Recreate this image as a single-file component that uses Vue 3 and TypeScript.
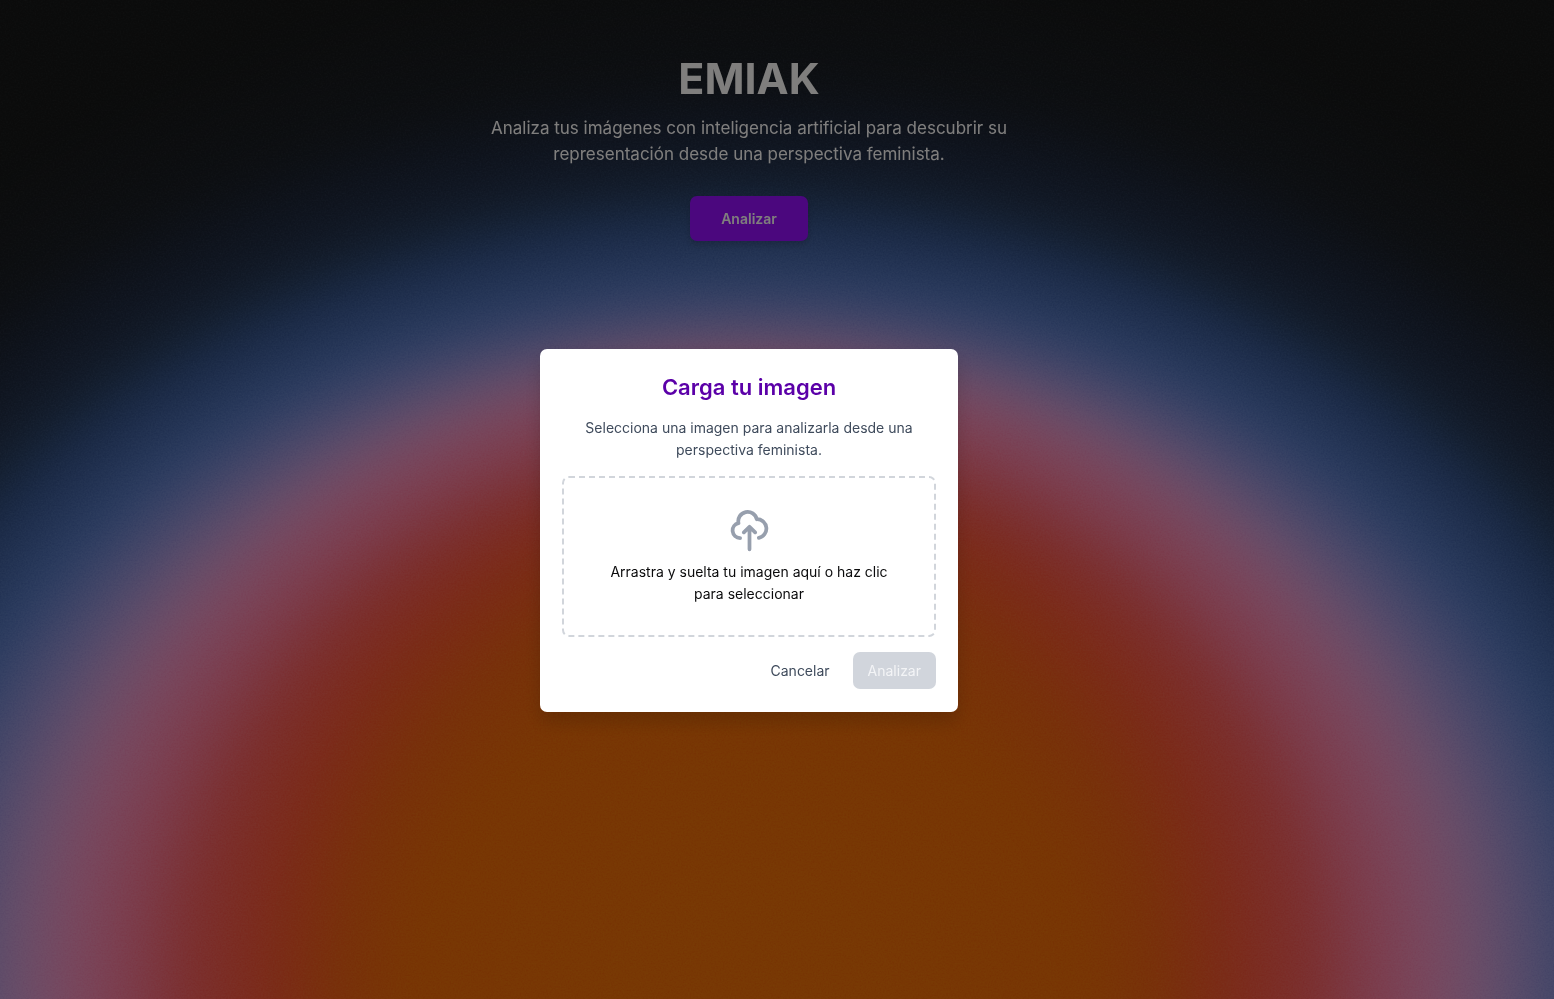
<script setup lang="ts">
import { ref } from 'vue'

interface Stop {
  rx: number
  ry: number
  rgb: [number, number, number]
}

interface Ring {
  rx: number
  ry: number
  fill: string
}

/* Colours of the glow, from the night sky at the rim to the amber core. */
const stops: Stop[] = [
  { rx: 1240, ry: 1050, rgb: [23, 24, 24] },
  { rx: 1150, ry: 925, rgb: [26, 30, 36] },
  { rx: 1080, ry: 870, rgb: [30, 40, 60] },
  { rx: 1029, ry: 832, rgb: [36, 50, 76] },
  { rx: 992, ry: 804, rgb: [42, 66, 100] },
  { rx: 956, ry: 782, rgb: [52, 82, 138] },
  { rx: 865, ry: 716, rgb: [88, 122, 194] },
  { rx: 796, ry: 678, rgb: [150, 146, 212] },
  { rx: 735, ry: 650, rgb: [208, 156, 210] },
  { rx: 684, ry: 628, rgb: [240, 144, 190] },
  { rx: 622, ry: 588, rgb: [248, 120, 150] },
  { rx: 560, ry: 546, rgb: [246, 94, 92] },
  { rx: 490, ry: 512, rgb: [246, 86, 54] },
  { rx: 450, ry: 472, rgb: [244, 90, 36] },
  { rx: 410, ry: 424, rgb: [240, 98, 20] },
  { rx: 340, ry: 330, rgb: [240, 108, 8] },
  { rx: 120, ry: 110, rgb: [240, 112, 8] },
]

const STEPS = 16

const mix = (a: number, b: number, t: number): number => a + (b - a) * t

const rings: Ring[] = stops.slice(0, -1).flatMap((from, i) => {
  const to = stops[i + 1]
  return Array.from({ length: STEPS }, (_, k) => {
    const t = k / STEPS
    const channels = from.rgb.map((c, n) => Math.round(mix(c, to.rgb[n], t)))
    return {
      rx: Math.round(mix(from.rx, to.rx, t)),
      ry: Math.round(mix(from.ry, to.ry, t)),
      fill: `rgb(${channels.join(',')})`,
    }
  })
})

const open = ref(true)
const fileName = ref('')

function onFile(event: Event): void {
  const input = event.target as HTMLInputElement
  fileName.value = input.files?.[0]?.name ?? ''
}
</script>

<template>
  <div class="page">
    <svg class="glow" viewBox="0 0 1554 999" preserveAspectRatio="none" aria-hidden="true">
      <defs>
        <filter id="soften" x="-100" y="-100" width="1754" height="1299" filterUnits="userSpaceOnUse" color-interpolation-filters="sRGB">
          <feGaussianBlur stdDeviation="18" />
        </filter>
        <filter id="grain" x="0" y="0" width="100%" height="100%" color-interpolation-filters="sRGB">
          <feTurbulence type="fractalNoise" baseFrequency="0.6" numOctaves="2" seed="4" />
          <feColorMatrix type="saturate" values="0" />
          <feComponentTransfer><feFuncA type="linear" slope="0" intercept="1" /></feComponentTransfer>
        </filter>
      </defs>
      <g filter="url(#soften)">
        <rect x="-100" y="-100" width="1754" height="1299" fill="#171818" />
        <ellipse v-for="(ring, i) in rings" :key="i" cx="749" cy="1000" :rx="ring.rx" :ry="ring.ry" :fill="ring.fill" />
      </g>
      <rect class="grain" width="1554" height="999" filter="url(#grain)" />
    </svg>

    <main class="hero">
      <h1>EMIAK</h1>
      <p>Analiza tus imágenes con inteligencia artificial para descubrir su representación desde una perspectiva feminista.</p>
      <button type="button" class="cta" @click="open = true">Analizar</button>
    </main>

    <div v-if="open" class="overlay">
      <section class="modal" role="dialog" aria-modal="true" aria-labelledby="modal-title">
        <h2 id="modal-title">Carga tu imagen</h2>
        <p class="lead">Selecciona una imagen para analizarla desde una perspectiva feminista.</p>
        <label class="drop" for="image-file">
          <svg class="cloud" viewBox="0 0 24 24" fill="none" stroke="currentColor" stroke-width="2" stroke-linecap="round" stroke-linejoin="round" aria-hidden="true">
            <path d="M7 16a4 4 0 01-.88-7.903A5 5 0 1115.9 6L16 6a5 5 0 011 9.9M15 13l-3-3m0 0l-3 3m3-3v12" />
          </svg>
          <span>{{ fileName || 'Arrastra y suelta tu imagen aquí o haz clic para seleccionar' }}</span>
          <input id="image-file" class="file" type="file" accept="image/*" @change="onFile" />
        </label>
        <div class="actions">
          <button type="button" class="cancel" @click="open = false">Cancelar</button>
          <button type="button" class="submit" :disabled="!fileName">Analizar</button>
        </div>
      </section>
    </div>
  </div>
</template>

<style>
body {
  margin: 0;
  background: #0b0c0c;
}
</style>

<style scoped>
.page {
  position: relative;
  box-sizing: border-box;
  min-height: 100vh;
  padding-right: 56px;
  overflow: hidden;
  font-family: Inter, "Liberation Sans", sans-serif;
  font-size: 14px;
  line-height: 22px;
}

.glow {
  position: absolute;
  inset: 0;
  width: 100%;
  height: 100%;
}

.grain {
  opacity: 0.25;
  mix-blend-mode: soft-light;
}

.hero {
  position: relative;
  display: flex;
  flex-direction: column;
  align-items: center;
  padding: 56px 24px 0;
  text-align: center;
}

h1,
h2,
p {
  margin: 0;
}

h1 {
  color: #fffdfb;
  font-size: 43px;
  line-height: 45px;
  font-weight: 700;
}

.hero p {
  max-width: 540px;
  margin-top: 14px;
  color: #fffdfb;
  font-size: 17px;
  line-height: 26px;
}

button {
  border: 0;
  border-radius: 7px;
  font: inherit;
  cursor: pointer;
}

.cta {
  margin-top: 29px;
  padding: 0 31px;
  height: 45px;
  color: #fffdfb;
  background: #960efc;
  font-weight: 600;
  box-shadow: 0 4px 6px rgba(0, 0, 0, 0.15);
}

.overlay {
  position: fixed;
  inset: 0;
  display: flex;
  align-items: center;
  justify-content: center;
  padding: 62px 56px 0 0;
  background: rgba(0, 0, 0, 0.5);
}

.modal {
  box-sizing: border-box;
  width: 100%;
  max-width: 418px;
  padding: 23px 22px;
  border-radius: 7px;
  background: #fff;
  text-align: center;
  box-shadow: 0 10px 18px rgba(0, 0, 0, 0.15);
}

h2 {
  color: #5b00a8;
  font-size: 22px;
  line-height: 30px;
  font-weight: 600;
}

.lead {
  margin-top: 15px;
  color: #3f4b5c;
}

.drop {
  display: flex;
  flex-direction: column;
  align-items: center;
  gap: 8px;
  margin-top: 15px;
  padding: 30px;
  border: 2px dashed #d1d5db;
  border-radius: 7px;
  color: #0b0b0c;
  cursor: pointer;
}

.cloud {
  width: 45px;
  height: 45px;
  color: #979fad;
}

.file {
  position: absolute;
  width: 1px;
  height: 1px;
  opacity: 0;
}

.actions {
  display: flex;
  justify-content: flex-end;
  gap: 8px;
  margin-top: 15px;
}

.cancel,
.submit {
  height: 37px;
  padding: 0 15px;
}

.cancel {
  color: #3f4b5c;
  background: transparent;
}

.submit {
  color: #fff;
  background: #d1d5dc;
}

.submit:disabled {
  color: #f3f4f6;
  cursor: not-allowed;
}
</style>
